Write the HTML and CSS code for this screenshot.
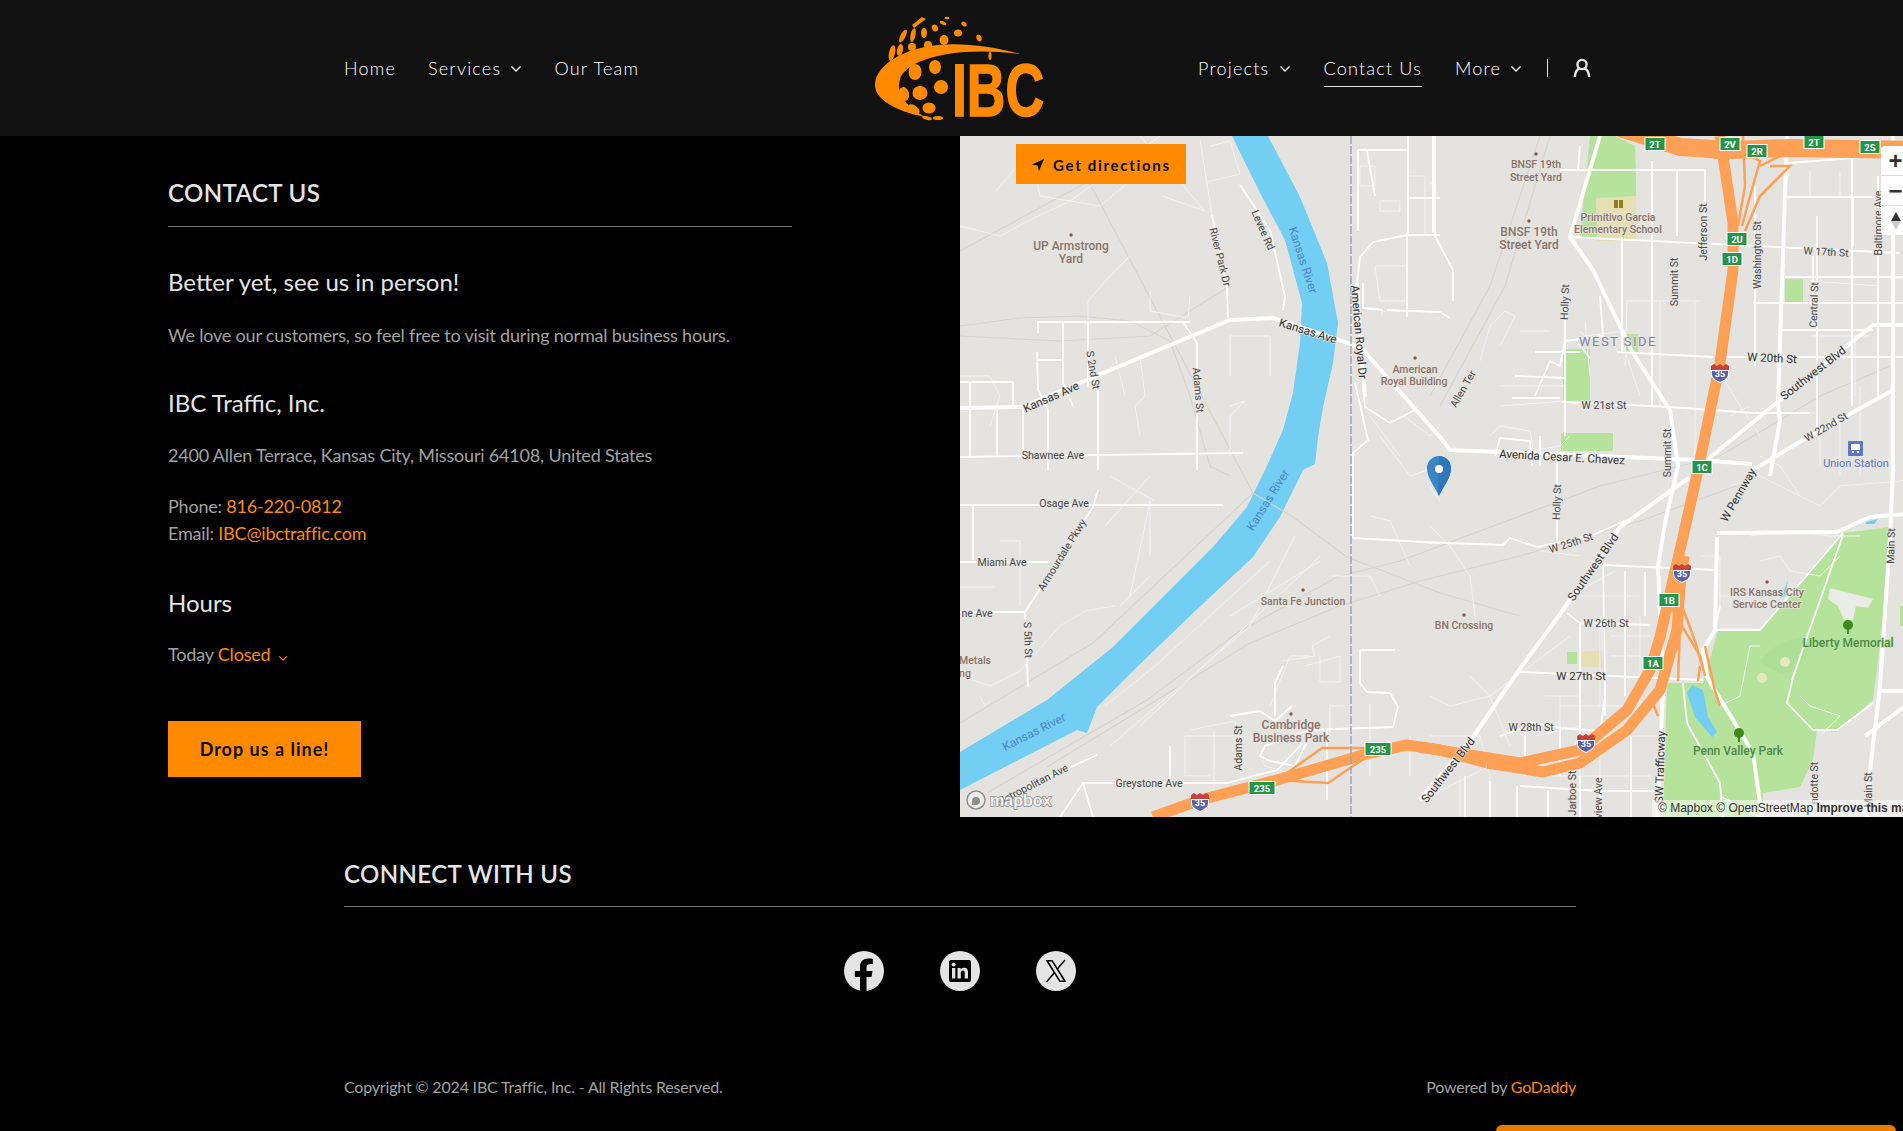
FILE: index.html
```html
<!DOCTYPE html>
<html lang="en">
<head>
  <meta charset="UTF-8">
  <title>Contact Us | IBC Traffic, Inc.</title>
  <link rel="stylesheet" href="styles.css">
</head>
<body>
<div class="page">

  <header class="topbar">
    <nav class="nav nav-left">
      <a href="#">Home</a>
      <a href="#">Services <svg class="chev" viewBox="0 0 12 8"><path d="M1.5 1.5 6 6l4.5-4.5"/></svg></a>
      <a href="#">Our Team</a>
    </nav>
    <a class="logo" href="#">
      <svg width="180" height="115" viewBox="870 10 180 115">
        <g class="logo-ink">
          <path d="M1020 53C990 44 950 40 925 46 895 52 875 68 875 84 875 98 895 110 925 116 905 105 896 92 900 78 905 60 950 44 1020 53Z"/>
          <ellipse cx="915" cy="71" rx="6.5" ry="8"/>
          <ellipse cx="935" cy="66" rx="6" ry="7"/>
          <ellipse cx="920" cy="92" rx="7.5" ry="7"/>
          <ellipse cx="941" cy="86" rx="7" ry="7"/>
          <ellipse cx="904" cy="93" rx="5" ry="7" transform="rotate(-15 904 93)"/>
          <ellipse cx="929" cy="107" rx="6.5" ry="5.5"/>
          <ellipse cx="914" cy="108" rx="6.5" ry="3.5" transform="rotate(35 914 108)"/>
          <ellipse cx="938" cy="117" rx="5" ry="2"/>
          <ellipse cx="927" cy="117" rx="5" ry="1.8" transform="rotate(15 927 117)"/>
          <ellipse cx="892" cy="52" rx="3" ry="8" transform="rotate(12 892 52)"/>
          <ellipse cx="900" cy="49" rx="3" ry="6" transform="rotate(12 900 49)"/>
          <ellipse cx="903" cy="35" rx="2.5" ry="7" transform="rotate(28 903 35)"/>
          <ellipse cx="913" cy="34" rx="2.5" ry="7" transform="rotate(12 913 34)"/>
          <ellipse cx="924" cy="32" rx="3" ry="5"/>
          <ellipse cx="935" cy="27" rx="3" ry="3.5" transform="rotate(-30 935 27)"/>
          <ellipse cx="958" cy="32" rx="4" ry="3.5"/>
          <ellipse cx="979" cy="37" rx="2.5" ry="3.5" transform="rotate(-20 979 37)"/>
          <ellipse cx="964" cy="23" rx="3" ry="2" transform="rotate(35 964 23)"/>
          <ellipse cx="943" cy="22" rx="3.5" ry="1.6" transform="rotate(25 943 22)"/>
          <ellipse cx="947" cy="17" rx="2.5" ry="1.2"/>
          <ellipse cx="944" cy="39" rx="4.5" ry="5"/>
          <ellipse cx="928" cy="44" rx="4" ry="4"/>
          <ellipse cx="912" cy="46" rx="4" ry="4"/>
          <ellipse cx="990" cy="55" rx="1.5" ry="4"/>
          <path d="M912 24 922 16 926 18 914 27Z"/>
          <text class="logo-text" x="952" y="115" textLength="92" lengthAdjust="spacingAndGlyphs">IBC</text>
        </g>
      </svg>
    </a>
    <nav class="nav nav-right">
      <a href="#">Projects <svg class="chev" viewBox="0 0 12 8"><path d="M1.5 1.5 6 6l4.5-4.5"/></svg></a>
      <a class="active" href="#">Contact Us</a>
      <a href="#">More <svg class="chev" viewBox="0 0 12 8"><path d="M1.5 1.5 6 6l4.5-4.5"/></svg></a>
      <span class="divider"></span>
      <a class="account" href="#" aria-label="Account">
        <svg width="20" height="20" viewBox="0 0 20 20"><circle cx="10" cy="6.500" r="4.600"/><path d="M2.800 19c.4-4.400 2.200-7.600 4.700-8.600M17.200 19c-.4-4.400-2.200-7.600-4.700-8.600"/></svg>
      </a>
    </nav>
  </header>

  <main class="contact">
    <section class="info">
      <h4 class="rule-title">CONTACT US</h4>
      <h3 class="lead">Better yet, see us in person!</h3>
      <p class="muted visit">We love our customers, so feel free to visit during normal business hours.</p>
      <h3 class="company">IBC Traffic, Inc.</h3>
      <p class="muted address">2400 Allen Terrace, Kansas City, Missouri 64108, United States</p>
      <p class="muted phone">Phone: <a href="#">816-220-0812</a><br>Email: <a href="#">IBC@ibctraffic.com</a></p>
      <h3 class="hours-title">Hours</h3>
      <p class="muted hours">Today <a href="#">Closed <svg class="chev chev-small" viewBox="0 0 12 8"><path d="M1.500 1.500 6 6l4.500-4.500"/></svg></a></p>
      <a class="btn" href="#">Drop us a line!</a>
    </section>

    <section class="map">
      <svg class="map-art" width="960" height="681" viewBox="0 0 960 681">
        <rect width="960" height="681" fill="#e5e3df"/>

        <!-- parks -->
        <g fill="#b6e39c">
          <path d="M758 494 800 494 837 451 850 434 883 397 930 391 925 470 913 564 877 596 857 594 853 624 840 651 803 657 802 681 703 681 707 547 743 547Z"/>
          <path d="M630 0 655 0 675 10 676 40 676 92 628 103 620 100Z"/>
          <rect x="603" y="213" width="27" height="52"/>
          <rect x="601" y="297" width="52" height="18"/>
          <rect x="825" y="143" width="18" height="24"/>
          <rect x="664" y="198" width="14" height="18"/>
          <rect x="607" y="516" width="10" height="12"/>
          <rect x="940" y="470" width="20" height="20"/>
        </g>
        <path d="M636 62 676 60 676 105 637 105Z" fill="#e6dfb4"/>
        <path d="M619 516 642 514 643 532 619 530Z" fill="#e6dfb4"/>
        <path d="M800 525C815 505 840 498 850 505 845 535 825 548 800 525Z" fill="#aedf96"/>
        <ellipse cx="802" cy="542" rx="5" ry="5" fill="#e6e7bd"/>
        <ellipse cx="825" cy="526" rx="5" ry="5" fill="#e6e7bd"/>
        <path d="M870 452 913 463 908 472 896 470 893 484 884 484 878 470 868 463Z" fill="#e8ebe6"/>

        <!-- water -->
        <g fill="#72cef2">
          <path d="M272 0 308 0 340 61 367 127 378 187 373 227 363 271 358 301 355 328 343 334 320 381 293 421 233 477 177 531 137 571 127 597 117 594 0 654 0 616 87 564 153 511 200 464 253 411 287 371 305 334 323 294 333 257 340 207 342 167 325 104 300 57Z"/>
          <path d="M732 549 743 554 748 581 757 596 752 601 735 581 727 557Z"/>
          <path d="M824 454 828 444 825 460 820 462Z"/>
          <path d="M906 386 918 383 914 388 906 388Z"/>
        </g>

        <!-- rail -->
        <g class="rail">
          <path d="M27 657 187 564 277 497 377 441 440 425 520 395 640 350 760 320 860 260 930 230"/>
          <path d="M87 631 290 507 377 471 460 445 560 420 680 385 790 345"/>
          <path d="M0 587 133 507 293 357"/>
          <path d="M110 10 293 357 333 381 387 421 480 457 560 480"/>
          <path d="M0 190 60 182 120 180 170 185 210 205 230 260 250 330 270 340"/>
          <path d="M0 200 100 205 190 200 270 150"/>
          <path d="M470 260 530 150 560 60 580 0"/>
          <path d="M480 270 545 150 575 50 590 0"/>
          <path d="M0 115 120 50 170 15"/>
        </g>

        <!-- thin service roads -->
        <g class="road-thin">
          <path d="M0 90 40 100 68 85 110 65 200 0M36 55 70 15 80 60 140 70 200 20M202 60 245 75M180 0 245 75M240 4 252 79M250 10 270 5 280 38 247 46"/>
          <path d="M128 186V165L150 140 170 120M190 155V175L228 182 230 160"/>
          <path d="M270 200V240M270 200H310V240M0 240H30L40 260 30 290M180 220 185 260 175 270 180 300M155 220 165 260M270 270 285 265 270 280V320"/>
          <path d="M150 340 195 365M0 451H35M40 405H60V470M145 390 190 340M190 420V365L170 460M160 470 190 440M0 540 30 550 60 535 100 490 125 475 155 470M145 570 195 530 310 425M20 560 25 570 30 565M150 610 290 490 335 400M180 590 350 430 360 420M270 480 360 425"/>
          <path d="M323 525 355 520 352 510 370 500M345 530 380 520V546H360M360 520V546M230 594 275 585 280 610M225 600H275M225 600V640H250M254 595V650M300 620 305 630 340 640M310 570 330 520H350M372 440H410L420 460M410 380 430 385 450 430M470 350 480 365"/>
          <path d="M370 568V600M370 570H385M410 568V640M450 600V640M470 600H520L530 640M500 640V681M530 630 470 660"/>
          <path d="M470 45 478 60M448 40H465V100M400 30H415V50H400ZM420 65H440V75H420ZM415 130H447V165H420Z"/>
          <path d="M422 180V175H446M440 277 470 300 480 290M410 280 440 320M420 300 450 340 480 330"/>
          <path d="M520 225 530 190 545 175 555 180 540 210M560 195H590M540 250H605M540 270 605 265M540 320 600 310 610 300M530 300 540 290 570 295 575 325M625 185 630 240M660 195 665 215 680 260"/>
          <path d="M666 165H740M667 165 665 230M700 165V270M735 165V325M762 240 780 270 800 300M620 195 625 200 665 195M770 280 790 270M860 280V330M880 280V340M900 250V340M930 260V340M945 210 950 340"/>
          <path d="M830 30 825 55M850 35V60M880 35V60M920 70H960M915 140 960 145M850 145 920 150M850 200H910M895 200V260"/>
          <path d="M470 390 490 410 510 440 515 480M580 415 620 420M770 350 800 340 860 370 880 350 940 345 960 340M790 400 830 395 870 400 900 400M800 425 820 420 830 435 860 440 880 420M800 320 820 330 840 360"/>
          <path d="M470 560 490 570 530 560 550 610M510 540 530 560 610 500M610 460 655 435M620 460H680M650 500H690M650 520H680M600 570H675M640 480V570M585 560H620M575 600 620 590 610 630M600 560V640M620 550V640M680 480V590M700 440V480M720 420V500M740 420H760V470M760 460H800M580 640H690M705 600H640V681M530 640V681M860 600 880 580 850 570 840 560M760 570 780 560 790 510 800 510"/>
        </g>

        <!-- streets -->
        <g class="road">
          <path d="M77 186H230M78 186V197M103 186V207M128 186V251M223 186 237 207V334M77 216 78 254 88 274V334M77 224H103M103 207V247L113 270M0 246H53V271M10 246V321M37 271V321M63 271V321M138 254V334M0 321 283 317"/>
          <path d="M252 79 267 151 268 182M280 49 310 94 325 161 323 174"/>
          <path d="M398 14H447M448 0V97M473 0V97M448 62H480M398 14V95M397 147 400 121 413 106 447 99 480 99M447 97V181M427 174 480 176 490 182M403 172 423 174M403 147V172"/>
          <path d="M403 247 405 271 430 287 455 274M395 247 408 304 393 317V402M393 402 480 407M475 0V100L493 134V165"/>
          <path d="M0 369H263M138 354 133 371 65 476H0M65 476 68 551M0 426H90M13 369V424M400 514V547L407 556 430 557 438 571 433 591 350 594 305 610 300 620 310 625 335 630 350 600M400 514H435M367 594V664M137 619 33 667M210 610V650"/>
          <path d="M100 681 123 647H267L317 634 343 607M123 647 133 681M323 530 315 547V580M270 580 300 575 315 585 332 570"/>
          <path d="M610 101 940 117M657 216 753 221M767 221H960M603 266 710 271 793 277 850 277M662 101V216M692 25V270M717 35V100M745 34V100M600 34H745M620 10 618 34M795 50V230M857 80V300M892 20V270M918 40V260M827 61H960M825 141H960M793 167H960M822 194H913M640 160 643 200 605 205 600 230 590 225 575 260M575 216H620M555 240 605 242M552 262H600"/>
          <path d="M605 166V300M580 300V330M618 207 630 222M535 320 540 302 570 305 572 330M460 406 543 409 550 402 577 411 633 399 667 384M597 315V405M607 477 620 487 690 489M643 429 757 434M560 536 743 544M643 429 645 540V580M620 487V600M665 435V560M685 436V480M570 586 600 592 640 595 645 560M540 600 565 591V640M600 590V640M620 640V681M560 650 640 655 698 655M505 640V681M530 645V681M557 650V681M588 655V681M640 640V681M671 600V681M760 470 755 494 800 494"/>
          <path d="M827 27 960 17M893 60V110M853 120V170M755 494 800 494 883 397M833 541 827 567 853 594 877 594 913 567M883 399 833 541M723 547 727 587 760 647 763 681M760 660 800 681"/>
          <path d="M480 301 490 314M407 15 415 60"/>
        </g>
        <g class="road-major">
          <path d="M0 272 62 271 270 184 313 182 388 207 403 214 480 301 490 314 737 324 792 328"/>
          <path d="M640 0 610 101 633 134 673 217 710 274 718 330 705 387 698 430 703 551 698 681"/>
          <path d="M827 0 818 267 820 284 810 340"/>
          <path d="M397 147 399 190 405 261"/>
          <path d="M747 324 820 264 913 189 960 189"/>
          <path d="M793 334 843 304 933 254"/>
          <path d="M730 341 660 391 603 474 557 537 513 601 460 664"/>
          <path d="M757 401 755 494 743 514 747 541 793 617 802 681"/>
          <path d="M757 397 877 396 910 381 960 377"/>
          <path d="M933 0V334L930 401 920 551 910 634 907 681"/>
          <path d="M920 555H960M905 600 945 570"/>
        </g>

        <!-- highways -->
        <g class="hwy">
          <path d="M460 611 560 627 620 614 667 574 690 534 700 501 713 444 723 401 738 334 745 300 760 227 773 134 773 87 760 0"/>
          <path d="M527 627 583 636 620 627 667 594 700 554 717 494 720 451 724 420"/>
          <path d="M193 681 240 664 317 644 410 617 447 609 480 614 527 627"/>
          <path class="hwy-wide" d="M660 -8 720 11 770 14 830 12 960 14"/>
        </g>
        <g class="ramp">
          <path d="M660 0 725 18 760 22 770 60 772 87M783 0 785 50 778 90M790 20 800 25 790 60 782 90M810 30 830 30 800 60 785 95M830 15 800 30"/>
          <path d="M710 470 740 520 745 540M722 470 735 505 742 530M690 560 698 580M720 490 718 545M740 530 738 545M745 510 755 555 760 570"/>
          <path d="M317 644 362 612H418M317 644 368 647 390 632 418 613"/>
        </g>

        <path class="county" d="M391 0V681"/>

        <!-- labels -->
        <g class="lbl-poi">
          <text x="111" y="110">UP Armstrong</text><text x="111" y="123">Yard</text>
          <text class="sm" x="455" y="233">American</text><text class="sm" x="454" y="245">Royal Building</text>
          <text class="sm" x="576" y="28">BNSF 19th</text><text class="sm" x="576" y="41">Street Yard</text>
          <text x="569" y="96">BNSF 19th</text><text x="569" y="109">Street Yard</text>
          <text class="sm" x="658" y="81">Primitivo Garcia</text><text class="sm" x="658" y="93">Elementary School</text>
          <text class="sm" x="343" y="465">Santa Fe Junction</text>
          <text class="sm" x="504" y="489">BN Crossing</text>
          <text x="331" y="589">Cambridge</text><text x="331" y="602">Business Park</text>
          <text class="sm" x="807" y="456">IRS Kansas City</text><text class="sm" x="807" y="468">Service Center</text>
          <text class="sm" x="15" y="524">Metals</text><text class="sm" x="5" y="537">ng</text>
        </g>
        <g class="dots">
          <circle cx="111" cy="99" r="1.700"/><circle cx="455" cy="222" r="1.700"/><circle cx="576" cy="18" r="1.700"/><circle cx="569" cy="85" r="1.700"/>
          <circle cx="343" cy="454" r="1.700"/><circle cx="504" cy="479" r="1.700"/><circle cx="331" cy="578" r="1.700"/><circle cx="807" cy="446" r="1.700"/>
        </g>
        <g class="lbl-park">
          <text x="778" y="615">Penn Valley Park</text><text x="888" y="507">Liberty Memorial</text>
        </g>
        <g class="lbl-water">
          <text transform="translate(343 124) rotate(72)">Kansas River</text>
          <text transform="translate(308 364) rotate(-58)">Kansas River</text>
          <text transform="translate(74 596) rotate(-27)">Kansas River</text>
        </g>
        <text class="lbl-hood" x="658" y="205">WEST SIDE</text>
        <text class="lbl-station" x="896" y="327">Union Station</text>
        <g class="lbl-road">
          <text transform="translate(260 121) rotate(76)">River Park Dr</text>
          <text transform="translate(303 94) rotate(66)">Levee Rd</text>
          <text class="lg" transform="translate(399 196) rotate(85)">American Royal Dr</text>
          <text class="lg" transform="translate(348 195) rotate(17)">Kansas Ave</text>
          <text class="lg" transform="translate(91 261) rotate(-24)">Kansas Ave</text>
          <text transform="translate(133 234) rotate(80)">S 2nd St</text>
          <text transform="translate(238 254) rotate(85)">Adams St</text>
          <text x="93" y="319">Shawnee Ave</text>
          <text x="104" y="367">Osage Ave</text>
          <text transform="translate(102 419) rotate(-58)">Armourdale Pkwy</text>
          <text x="42" y="426">Miami Ave</text>
          <text x="17" y="477">ne Ave</text>
          <text transform="translate(68 504) rotate(88)">S 5th St</text>
          <text transform="translate(72 649) rotate(-27)">Metropolitan Ave</text>
          <text x="189" y="647">Greystone Ave</text>
          <text transform="translate(278 612) rotate(-90)">Adams St</text>
          <text transform="translate(743 96) rotate(-90)">Jefferson St</text>
          <text transform="translate(714 146) rotate(-90)">Summit St</text>
          <text transform="translate(797 119) rotate(-90)">Washington St</text>
          <text x="866" y="116" transform="rotate(3 866 116)">W 17th St</text>
          <text transform="translate(854 169) rotate(-88)">Central St</text>
          <text transform="translate(918 87) rotate(-90)">Baltimore Ave</text>
          <text transform="translate(605 166) rotate(-88)">Holly St</text>
          <text class="lg" x="812" y="222" transform="rotate(3 812 222)">W 20th St</text>
          <text class="lg" transform="translate(853 237) rotate(-38)">Southwest Blvd</text>
          <text transform="translate(503 253) rotate(-60)">Allen Ter</text>
          <text x="644" y="269">W 21st St</text>
          <text transform="translate(866 291) rotate(-30)">W 22nd St</text>
          <text transform="translate(707 317) rotate(-90)">Summit St</text>
          <text class="lg" x="602" y="321" transform="rotate(3 602 321)">Avenida Cesar E. Chavez</text>
          <text transform="translate(597 366) rotate(-88)">Holly St</text>
          <text transform="translate(611 407) rotate(-18)">W 25th St</text>
          <text class="lg" transform="translate(633 431) rotate(-55)">Southwest Blvd</text>
          <text class="lg" transform="translate(778 359) rotate(-60)">W Pennway</text>
          <text x="646" y="487">W 26th St</text>
          <text class="lg" x="621" y="540">W 27th St</text>
          <text x="571" y="591">W 28th St</text>
          <text transform="translate(931 410) rotate(-88)">Main St</text>
          <text transform="translate(908 654) rotate(-90)">Main St</text>
          <text class="lg" transform="translate(488 634) rotate(-52)">Southwest Blvd</text>
          <text class="lg" transform="translate(700 631) rotate(-88)">SW Trafficway</text>
          <text transform="translate(612 657) rotate(-90)">Jarboe St</text>
          <text transform="translate(638 662) rotate(-90)">view Ave</text>
          <text transform="translate(854 647) rotate(-90)">ndotte St</text>
        </g>

        <!-- map icons -->
        <g class="tree"><circle cx="779" cy="597" r="5"/><circle cx="888" cy="489" r="5"/><path d="M778 598h2v8h-2zM887 490h2v8h-2z"/></g>
        <g fill="#8f7f1c"><rect x="654" y="64" width="4" height="8"/><rect x="659" y="64" width="4" height="8"/></g>
        <rect x="888" y="305" width="15" height="15" rx="1" fill="#5a77c9"/>
        <path d="M891 308h9v6h-9zM892 315h2v2h-2zM897 315h2v2h-2z" fill="#fff"/>

        <!-- shields -->
        <defs>
          <g id="i35">
            <path d="M-9-6V2C-9 7-4 9 0 11 4 9 9 7 9 2V-6Z" fill="#fff"/>
            <path d="M-8-1V2C-8 6-4 8 0 10 4 8 8 6 8 2V-1Z" fill="#5b61a8"/>
            <path d="M-9-6-6-8-3-6 0-8 3-6 6-8 9-6V-2H-9Z" fill="#c6423a"/>
          </g>
        </defs>
        <g class="shield-num">
          <use href="#i35" x="760" y="236"/><text x="760" y="238">35</text>
          <use href="#i35" x="722" y="436"/><text x="722" y="438">35</text>
          <use href="#i35" x="626" y="606"/><text x="626" y="608">35</text>
          <use href="#i35" x="240" y="665"/><text x="240" y="667">35</text>
        </g>
        <g class="exit">
          <g transform="translate(695 8)"><rect x="-10" y="-6.500" width="20" height="13"/><text>2T</text></g>
          <g transform="translate(770 8)"><rect x="-10" y="-6.500" width="20" height="13"/><text>2V</text></g>
          <g transform="translate(797 15)"><rect x="-10" y="-6.500" width="20" height="13"/><text>2R</text></g>
          <g transform="translate(854 6)"><rect x="-10" y="-6.500" width="20" height="13"/><text>2T</text></g>
          <g transform="translate(910 11)"><rect x="-10" y="-6.500" width="20" height="13"/><text>2S</text></g>
          <g transform="translate(777 103)"><rect x="-10" y="-6.500" width="20" height="13"/><text>2U</text></g>
          <g transform="translate(772 123)"><rect x="-10" y="-6.500" width="20" height="13"/><text>1D</text></g>
          <g transform="translate(742 331)"><rect x="-10" y="-6.500" width="20" height="13"/><text>1C</text></g>
          <g transform="translate(709 464)"><rect x="-10" y="-6.500" width="20" height="13"/><text>1B</text></g>
          <g transform="translate(693 527)"><rect x="-10" y="-6.500" width="20" height="13"/><text>1A</text></g>
          <g transform="translate(418 613)"><rect x="-13" y="-6.500" width="26" height="13"/><text>235</text></g>
          <g transform="translate(302 652)"><rect x="-13" y="-6.500" width="26" height="13"/><text>235</text></g>
        </g>

        <!-- pin -->
        <path d="M479 360C474 349 467 342 467 332A12 12 0 0 1 491 332C491 342 484 349 479 360Z" fill="#3a87c8"/>
        <path d="M479 360C477 349 479 345 479 320A12 12 0 0 1 491 332C491 342 484 349 479 360Z" fill="#2f78b8"/>
        <circle cx="479" cy="333" r="4" fill="#fff"/>

        <!-- mapbox mark -->
        <g class="mb-logo">
          <circle cx="16" cy="664" r="9"/>
          <path d="M12 665a4 4 0 1 1 4 4h-4z" fill="#8f8f8f" stroke="none"/>
          <text x="30" y="670">mapbox</text>
        </g>
      </svg>

      <a class="directions" href="#">
        <svg width="12" height="12" viewBox="0 0 12 12"><path d="M12 0 0 5.500l5.500.8L7 12z"/></svg>
        Get directions
      </a>

      <div class="zoom-ctrl">
        <span class="ctrl">+</span>
        <span class="ctrl">&minus;</span>
        <span class="ctrl">
          <svg width="12" height="20" viewBox="0 0 12 20"><path d="M6 1 11 10H1Z" fill="#333"/><path d="M6 19 11 10H1Z" fill="#ccc"/></svg>
        </span>
      </div>

      <div class="attrib">&copy; Mapbox &copy; OpenStreetMap <b>Improve this map</b></div>
    </section>
  </main>

  <section class="connect">
    <h4 class="rule-title">CONNECT WITH US</h4>
    <div class="socials">
      <a href="#" aria-label="Facebook">
        <svg width="40" height="40" viewBox="0 0 40 40"><circle cx="20" cy="20" r="20" fill="#e4e4e4"/><path d="M22.500 40V26H27.500L28.500 20H22.500V16.500C22.500 14.500 23.400 13 25.800 13H28.800V7.900C27.800 7.700 26.100 7.500 24.400 7.500 19.500 7.500 16 10.300 16 15.600V20H10.800V26H16V40Z" fill="#000"/></svg>
      </a>
      <a href="#" aria-label="LinkedIn">
        <svg width="40" height="40" viewBox="0 0 40 40"><circle cx="20" cy="20" r="20" fill="#e4e4e4"/><rect x="9" y="9" width="22" height="22" rx="2" fill="#000"/><g fill="#e4e4e4"><rect x="12" y="17" width="3.300" height="10.500"/><circle cx="13.650" cy="13.600" r="1.950"/><path d="M17.500 17H20.600V18.500C21.200 17.500 22.500 16.800 24 16.800 27.200 16.800 28 18.800 28 21.500V27.500H24.700V22.200C24.700 20.800 24.400 19.600 22.900 19.600 21.400 19.600 20.800 20.700 20.800 22.200V27.500H17.500Z"/></g></svg>
      </a>
      <a href="#" aria-label="X">
        <svg width="40" height="40" viewBox="0 0 40 40"><circle cx="20" cy="20" r="20" fill="#e4e4e4"/><path d="M9.500 9H16.500L30.500 31H23.500ZM12.500 10.500 24.300 29.500H27.500L15.700 10.500Z" fill="#000" fill-rule="evenodd"/><path d="M29 9 21.500 17.800M18.500 21.500 10.500 31" fill="none" stroke="#000" stroke-width="1.500"/></svg>
      </a>
    </div>
    <footer class="foot">
      <span>Copyright &copy; 2024 IBC Traffic, Inc. - All Rights Reserved.</span>
      <span>Powered by <a href="#">GoDaddy</a></span>
    </footer>
  </section>

  <div class="msg-tab"></div>
</div>
</body>
</html>
```

FILE: styles.css
```css
html, body {
  margin: 0;
  padding: 0;
  background: #000;
  overflow: hidden;
}
.page {
  position: relative;
  width: 1920px;
  height: 1131px;
  overflow: hidden;
  font-family: Lato, sans-serif;
  color: #e4e4e4;
}
a {
  color: #ff8a00;
  text-decoration: none;
}

/* header */
.topbar {
  display: flex;
  align-items: center;
  height: 136px;
  padding-left: 344px;
  background: #111;
}
.nav {
  display: flex;
  flex-shrink: 0;
  align-items: center;
  gap: 32px;
  font-size: 18px;
  font-weight: 300;
  letter-spacing: 1.200px;
  white-space: nowrap;
}
.nav a {
  color: #fff;
  line-height: 24px;
  padding: 6px 0;
  border-bottom: 1px solid transparent;
  margin-top: 1px;
}
.nav a.active {
  border-bottom-color: #e4e4e4;
}
.nav-left {
  width: 526px;
}
.nav-right {
  gap: 33px;
}
.logo {
  display: block;
  flex-shrink: 0;
  width: 328px;
  height: 115px;
}
.chev {
  width: 12px;
  height: 8px;
  margin-left: 3px;
  vertical-align: 2px;
  fill: none;
  stroke: currentColor;
  stroke-width: 1.300;
}
.chev-small {
  width: 10px;
  height: 7px;
  margin-left: 3px;
  vertical-align: -1px;
  stroke-width: 1.500;
}
.divider {
  width: 1px;
  height: 18px;
  margin: 0 -9px 0 -8px;
  background: #e4e4e4;
}
.account svg {
  display: block;
  fill: none;
  stroke: #e4e4e4;
  stroke-width: 2.400;
}
.logo-ink {
  fill: #ff8a00;
}
.logo-text {
  font-family: "Liberation Sans Narrow", "Liberation Sans", sans-serif;
  font-size: 74px;
  font-weight: 700;
  stroke: #ff8a00;
  stroke-width: 1.600;
}

/* contact */
.contact {
  display: grid;
  grid-template-columns: 960px 960px;
  height: 681px;
}
.info {
  padding: 0 168px;
}
.rule-title {
  margin: 0;
  font-size: 24px;
  font-weight: 600;
  line-height: 30px;
  letter-spacing: 0.400px;
  color: #e4e4e4;
  border-bottom: 1px solid #777;
}
.info .rule-title {
  padding: 42px 0 18px;
}
h3 {
  margin: 0;
  font-weight: 400;
  color: #e4e4e4;
  font-size: 24px;
  line-height: 30px;
}
.muted {
  margin: 0;
  font-size: 18px;
  font-weight: 400;
  letter-spacing: -0.190px;
  line-height: 27px;
  color: #a2a2a2;
}
.lead {
  margin-top: 40px;
}
.visit {
  margin-top: 25px;
}
.company {
  margin-top: 39px;
}
.address {
  margin-top: 24px;
}
.phone {
  margin-top: 24px;
}
.hours-title {
  margin-top: 41px;
}
.hours {
  margin-top: 23px;
}
.btn {
  display: block;
  width: 193px;
  height: 56px;
  margin-top: 53px;
  background: #ff8a00;
  color: #0b0b0b;
  font-size: 18px;
  font-weight: 700;
  letter-spacing: 1px;
  line-height: 56px;
  text-align: center;
}

/* map */
.map {
  position: relative;
  height: 681px;
  overflow: hidden;
}
.map-art {
  display: block;
}
.map-art text {
  font-family: Roboto, sans-serif;
}
.rail {
  fill: none;
  stroke: #d6d4cd;
  stroke-width: 1.200;
}
.road-thin {
  fill: none;
  stroke: #f1f2f6;
  stroke-width: 1;
}
.road {
  fill: none;
  stroke: #fff;
  stroke-width: 1.800;
  stroke-linejoin: round;
}
.road-major {
  fill: none;
  stroke: #fff;
  stroke-width: 4;
  stroke-linejoin: round;
}
.hwy {
  fill: none;
  stroke: #ffa057;
  stroke-width: 11;
  stroke-linejoin: round;
}
.hwy-wide {
  stroke-width: 18;
}
.ramp {
  fill: none;
  stroke: #ffa057;
  stroke-width: 2.500;
}
.county {
  fill: none;
  stroke: #9b9fb6;
  stroke-width: 1.400;
  stroke-dasharray: 8 2;
}
.lbl-poi text, .lbl-park text, .lbl-water text, .lbl-road text,
.lbl-hood, .lbl-station {
  text-anchor: middle;
  dominant-baseline: central;
  paint-order: stroke;
  stroke: #e5e3df;
  stroke-width: 1.500;
}
.lbl-poi text {
  font-size: 12px;
  font-weight: 500;
  fill: #8a7568;
}
.lbl-poi .sm {
  font-size: 10.500px;
}
.dots {
  fill: #7d5f50;
}
.lbl-park text {
  font-size: 12px;
  font-weight: 500;
  fill: #4f8a4a;
  stroke: #b6e39c;
}
.lbl-water text {
  font-size: 12px;
  fill: #4f86c9;
  stroke: none;
}
.lbl-hood {
  font-size: 13px;
  letter-spacing: 1.500px;
  fill: #7c86b5;
}
.lbl-station {
  font-size: 11px;
  fill: #5a77c9;
}
.lbl-road text {
  font-size: 10.500px;
  fill: #4a4a4a;
}
.lbl-road .lg {
  font-size: 11.500px;
  fill: #333;
}
.tree {
  fill: #3f8a1e;
}
.shield-num text {
  font-size: 9px;
  font-weight: 700;
  fill: #fff;
  text-anchor: middle;
  dominant-baseline: central;
}
.exit rect {
  fill: #23964a;
  stroke: #fff;
  stroke-width: 1;
}
.exit text {
  font-size: 9.500px;
  font-weight: 700;
  fill: #fff;
  text-anchor: middle;
  dominant-baseline: central;
}
.mb-logo circle {
  fill: #eee;
  stroke: #8f8f8f;
  stroke-width: 1.500;
}
.map-art .mb-logo text {
  font-family: "Liberation Sans", sans-serif;
  font-size: 16px;
  font-weight: 700;
  fill: #f2f2f2;
  stroke: #8f8f8f;
  stroke-width: 1.500;
  paint-order: stroke;
}
.directions {
  position: absolute;
  top: 8px;
  left: 56px;
  display: flex;
  align-items: center;
  gap: 9px;
  box-sizing: border-box;
  width: 170px;
  height: 40px;
  padding: 2px 0 0 16px;
  background: #ff8a00;
  color: #0b0b0b;
  font-size: 15px;
  font-weight: 700;
  letter-spacing: 1.700px;
  white-space: nowrap;
}
.zoom-ctrl {
  position: absolute;
  top: 10px;
  right: 10px;
  width: 29px;
  background: #fff;
  border-radius: 4px;
}
.ctrl {
  display: flex;
  align-items: center;
  justify-content: center;
  height: 29px;
  border-bottom: 1px solid #ddd;
  font-family: "Liberation Sans", sans-serif;
  font-size: 24px;
  font-weight: 700;
  color: #333;
}
.ctrl:last-child {
  border-bottom: 0;
}
.attrib {
  position: absolute;
  right: 0;
  bottom: 0;
  width: 268px;
  height: 17px;
  box-sizing: border-box;
  padding-left: 6px;
  background: rgba(255,255,255,0.5);
  font-family: "Liberation Sans", sans-serif;
  font-size: 12px;
  line-height: 17px;
  color: #333;
  white-space: nowrap;
}

/* connect + footer */
.connect {
  padding: 0 344px;
}
.connect .rule-title {
  padding: 42px 0 17px;
}
.socials {
  display: flex;
  justify-content: center;
  gap: 56px;
  margin-top: 44px;
}
.socials a, .socials svg {
  display: block;
}
.foot {
  display: flex;
  justify-content: space-between;
  margin-top: 84px;
  font-size: 16px;
  font-weight: 400;
  letter-spacing: -0.190px;
  line-height: 24px;
  color: #a2a2a2;
}
.msg-tab {
  position: absolute;
  right: 24px;
  bottom: 0;
  width: 400px;
  height: 6px;
  border-radius: 7px 7px 0 0;
  background: #e87b00;
}
```
